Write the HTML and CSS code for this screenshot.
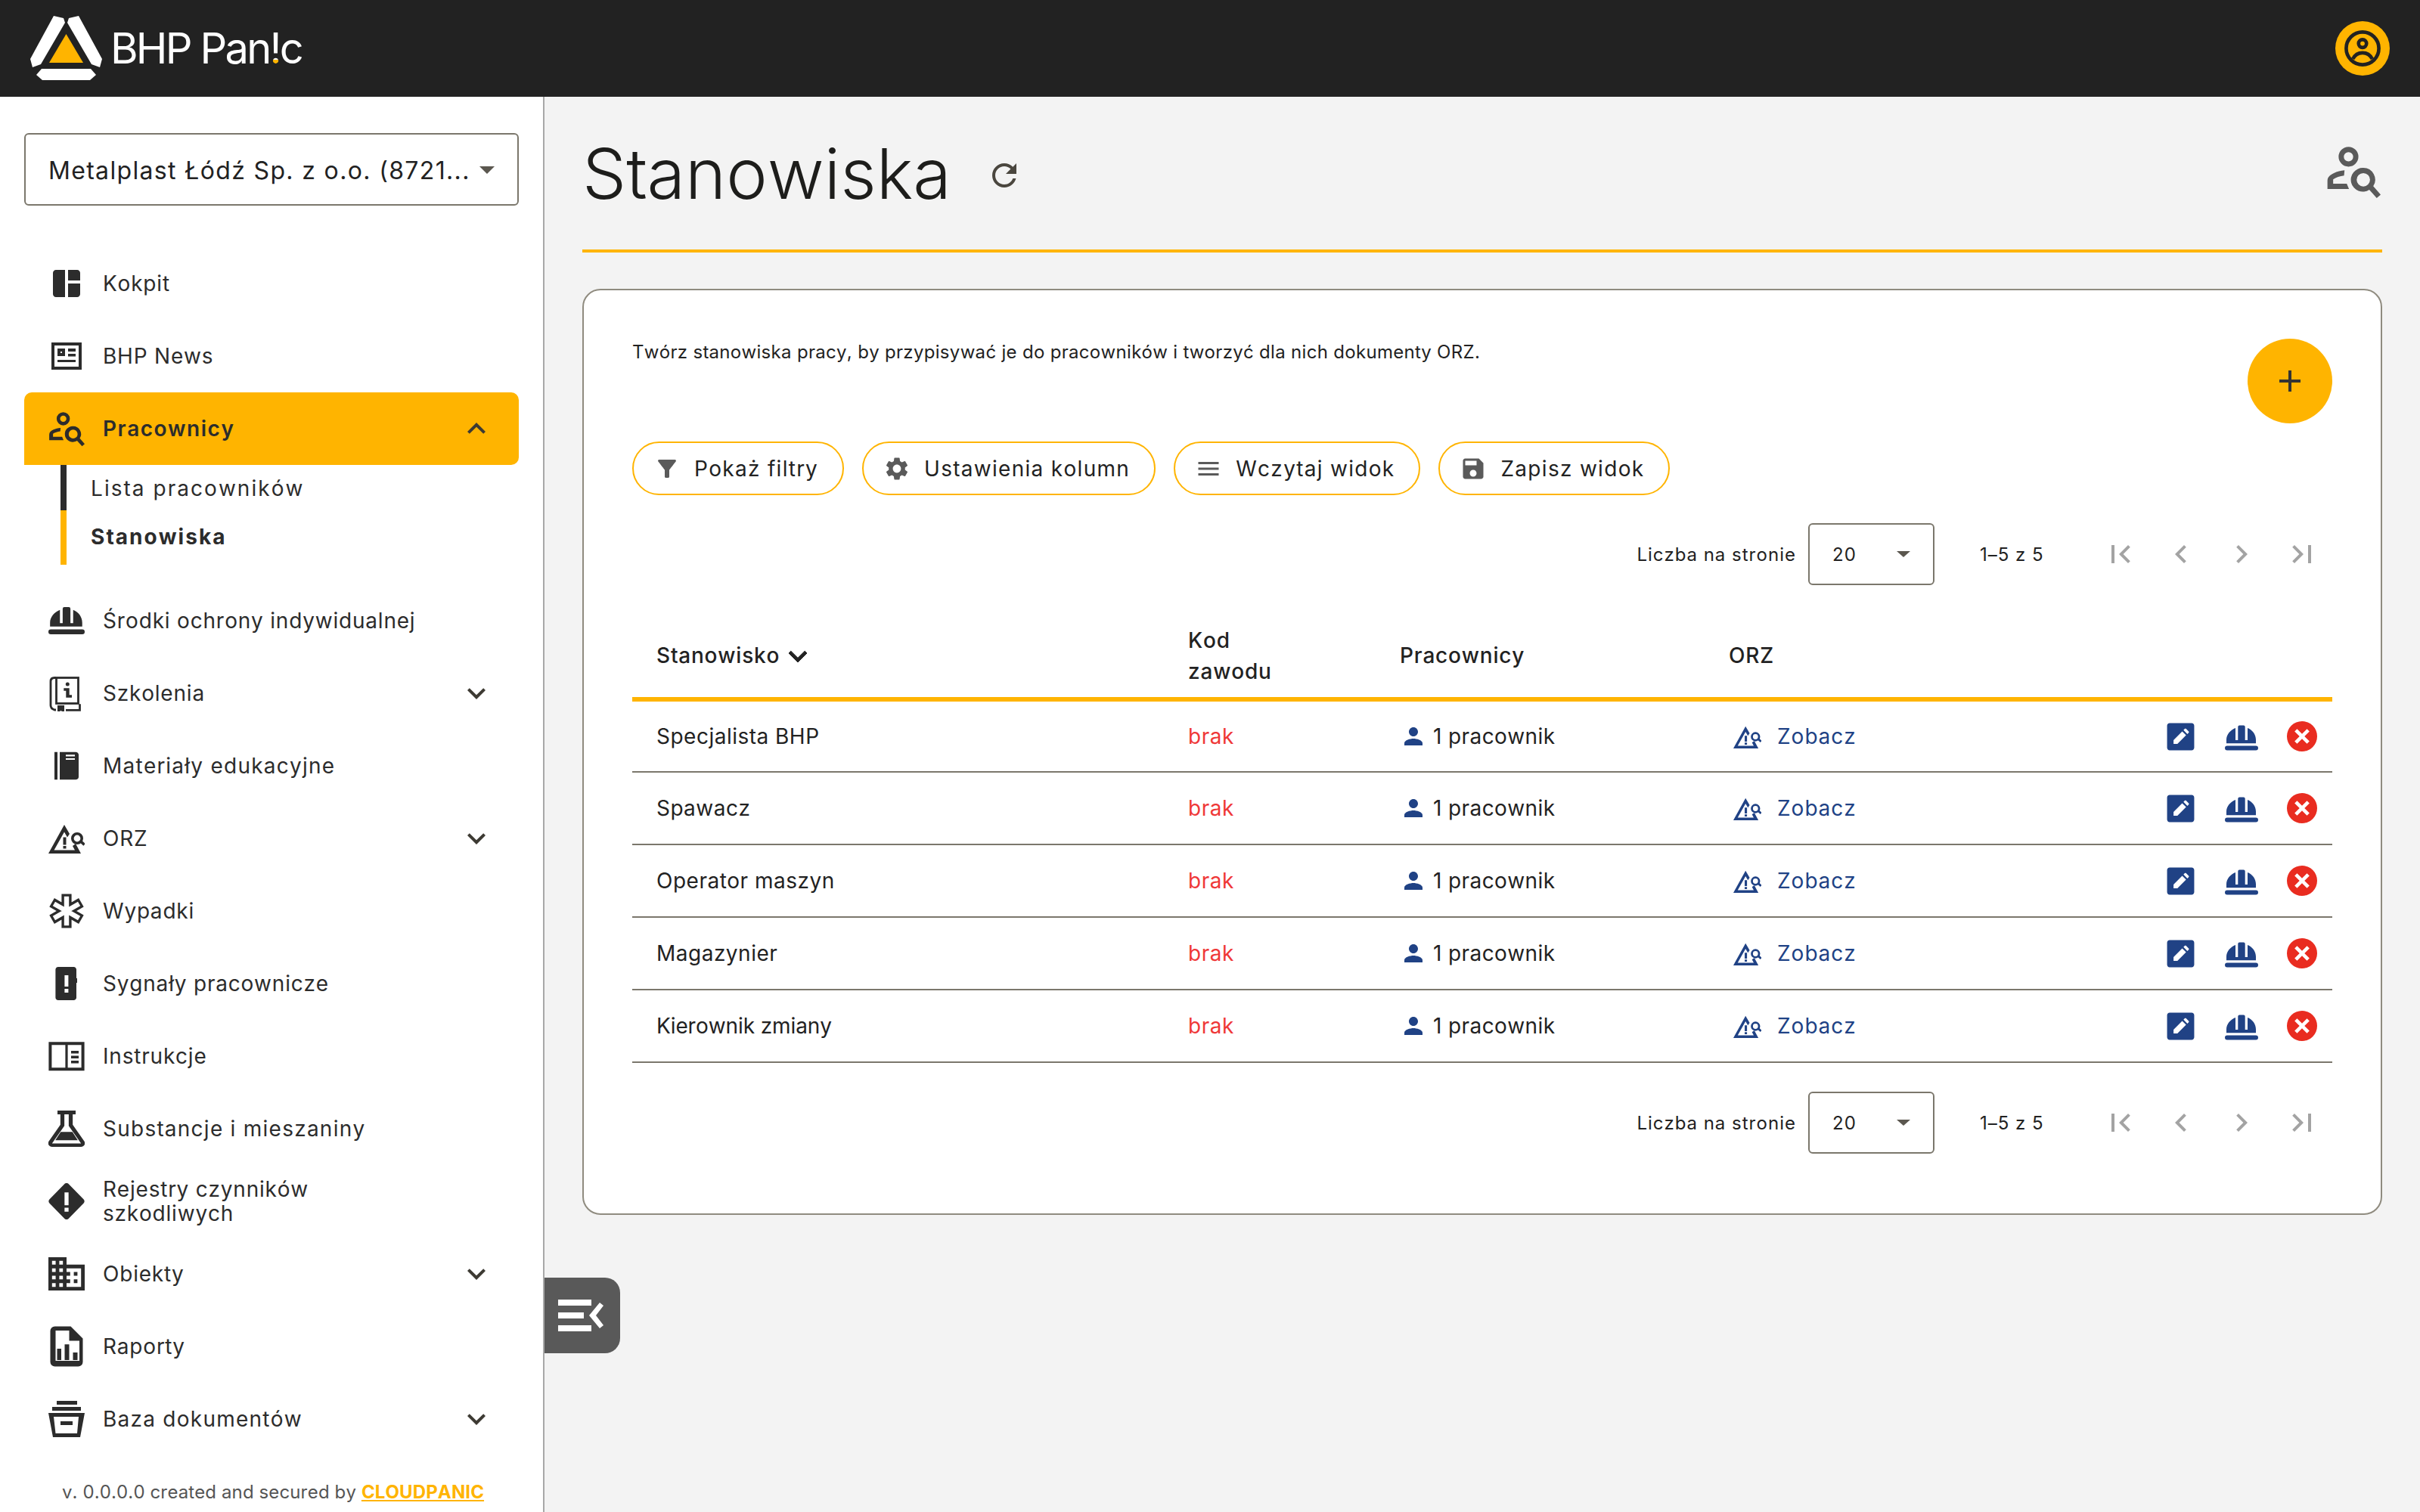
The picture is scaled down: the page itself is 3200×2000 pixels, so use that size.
FILE: index.html
```html
<!DOCTYPE html>
<html lang="pl">

<head>
    <meta charset="UTF-8">
    <title>BHP Panic - Stanowiska</title>
    <link rel="stylesheet" href="styles.css">
</head>

<body>
  <svg class="sprite" xmlns="http://www.w3.org/2000/svg">
    <symbol id="i-dash" viewBox="0 0 24 24"><path d="M11 21H5c-1.1 0-2-.9-2-2V5c0-1.1.9-2 2-2h6v18zm2 0h6c1.100 0 2-.9 2-2v-7h-8v9zm8-11V5c0-1.100-.9-2-2-2h-6v7h8z"/></symbol>
    <symbol id="i-news" viewBox="0 0 24 24"><path fill-rule="evenodd" d="M2 3h20v18H2zM4 5v14h16V5zM6 7h5v5H6zM8 9v1h1V9zM13 7h5v2h-5zM13 10.500h5v1.800h-5zM6 14.500h12v1.500H6z"/></symbol>
    <symbol id="i-person-search" viewBox="1 1.5 22 22"><path fill-rule="evenodd" d="M10 2.500a4 4 0 1 1 0 8 4 4 0 0 1 0-8zm0 2.100a1.900 1.900 0 1 0 0 3.800 1.900 1.900 0 0 0 0-3.800zM1.500 19.500v-3.300c0-1.500 1-2.300 2.600-3.100 1.300-.6 2.700-1 4.300-1.100l-.2 2.100c-1.700.2-3.300.7-4.400 1.500v1.800h5.500l.9 2.100zM16 11a4.800 4.800 0 0 1 4 7.400l3 3.400-1.600 1.400-3-3.400A4.800 4.800 0 1 1 16 11zm0 2.100a2.700 2.700 0 1 0 0 5.400 2.700 2.700 0 0 0 0-5.400z"/></symbol>
    <symbol id="i-helmet" viewBox="0 -5.500 44 44"><path d="M17.300 2a2 2 0 0 1 2-2h5.400a2 2 0 0 1 2 2V19.400H30V3.500C36.500 6 41 12 41 19V23.700H2V19C2 12 7.500 6 14 3.500V19.400H17.300zM3 27h38a3 3 0 0 1 0 6H3a3 3 0 0 1 0-6z"/></symbol>
    <symbol id="i-book-info" viewBox="14 12 48 48">
      <g fill="none" stroke="currentColor" stroke-width="2.800">
        <rect x="24.500" y="15.500" width="29" height="34"/>
        <path d="M24 15.500h-2c-3.500 0-5 2-5 5V52c0 3 2 5 5 6h2M37 58.300h18.500v-8"/>
      </g>
      <path d="M26 52h9v10l-4.500-3-4.500 3zM34.300 29.300h7.400v9h3.300v3.400h-7.700v-9h-3zM39.300 21.500a2.500 2.500 0 1 1 0 5 2.500 2.500 0 0 1 0-5z"/>
    </symbol>
    <symbol id="i-book" viewBox="0.5 -1.100 24 26.200" preserveAspectRatio="none"><path fill-rule="evenodd" d="M4.500 2H6.500V22H4.500zM8 2h10.500c1.100 0 2 .9 2 2v16c0 1.100-.9 2-2 2H8zM12 4v1.200h6V4zM12 6.500v1.200h6V6.500z"/></symbol>
    <symbol id="i-orz" viewBox="14 4 48 48">
      <path d="M35 10L42 22 39 26.500 35 19.500 21.500 43.500H49L46 38 50 35 57 48H14zM33.500 26.500h4v10h-4zM33.500 38h4v3.500h-4z"/>
      <circle cx="52" cy="28" r="6.200" fill="none" stroke="currentColor" stroke-width="3.600"/>
      <path d="M56 33.800L58.400 31 62.800 35 60.400 37.800z"/>
    </symbol>
    <symbol id="i-star" viewBox="0 0 24 24">
      <g fill="none" stroke="currentColor" stroke-width="6.600">
        <path d="M12 .8V23.200M2.300 6.400l19.400 11.200M2.300 17.600L21.700 6.400"/>
      </g>
      <g fill="none" stroke="#fff" stroke-width="3.200">
        <path d="M12 2.400V21.600M3.700 7.200l16.600 9.600M3.700 16.800L20.300 7.200"/>
      </g>
    </symbol>
    <symbol id="i-signal" viewBox="0 0 24 24"><path fill-rule="evenodd" d="M6.500 1h10.200c1 0 1.800.8 1.800 1.800v5.700h.5v3h-.5v9.700c0 1-.8 1.800-1.800 1.800H6.500c-1 0-1.800-.8-1.800-1.800V2.800c0-1 .8-1.800 1.800-1.800zM10.700 6.500v7.500h2.500V6.500zM10.700 15.500V18h2.500v-2.500z"/></symbol>
    <symbol id="i-reader" viewBox="0 0 24 24"><path fill-rule="evenodd" d="M.2 2.600h23.600v19H.2zM2.200 4.600v15h9v-15zM12.800 4.600v15h9v-15zM15 8.500h5v1.800h-5zM15 11.800h5v1.700h-5zM15 15h5v1.700h-5z"/></symbol>
    <symbol id="i-flask" viewBox="2 1 20 22" preserveAspectRatio="none"><path fill-rule="evenodd" d="M7 1h10v2.300h-1.600v6.300l6.400 10.100c.9 1.500-.2 3.300-1.900 3.300H4.100c-1.700 0-2.800-1.800-1.900-3.300L8.600 9.600V3.300H7zM10.800 3.300v7L4 20.900h16l-6.800-10.600v-7zM8.800 14h6.400l3 5H5.800z"/></symbol>
    <symbol id="i-diamond" viewBox="1.200 .8 21.600 22.400" preserveAspectRatio="none"><path fill-rule="evenodd" d="M10.600 1.500c.7-1 2.100-1 2.800 0l8.800 9.300c.6.700.6 1.700 0 2.400l-8.800 9.300c-.7 1-2.100 1-2.800 0l-8.800-9.300c-.6-.7-.6-1.700 0-2.400zM10.800 6.500v8h2.400v-8zM10.800 16v2.400h2.400V16z"/></symbol>
    <symbol id="i-domain" viewBox="2 2.200 20 19.600" preserveAspectRatio="none"><path d="M12 7V3H2v18h20V7H12zM6 19H4v-2h2v2zm0-4H4v-2h2v2zm0-4H4V9h2v2zm0-4H4V5h2v2zm4 12H8v-2h2v2zm0-4H8v-2h2v2zm0-4H8V9h2v2zm0-4H8V5h2v2zm10 12h-8v-2h2v-2h-2v-2h2v-2h-2V9h8v10zm-2-8h-2v2h2v-2zm0 4h-2v2h2v-2z"/></symbol>
    <symbol id="i-report" viewBox="-2.500 0 48 54"><path fill-rule="evenodd" d="M6 .5H27L43 16.500V47.500a6 6 0 0 1-6 6H6a6 6 0 0 1-6-6V6.500a6 6 0 0 1 6-6zM7 6V46H38.500V19.500H25V6zM9 30h5.500V45H9zM19 24.300h6V45H19zM30 35h6V45H30z"/></symbol>
    <symbol id="i-archive" viewBox="14 14 48 48"><path fill-rule="evenodd" d="M25 14h27v5H25zM19 22h38v5H19zM14 30h48l-6 32H20zM21 35l2.500 22h28.500L54 35zM30 41h16v5H30z"/></symbol>
    <symbol id="i-down" viewBox="0 0 24 24"><path d="M16.590 8.590L12 13.170 7.410 8.590 6 10l6 6 6-6z"/></symbol>
    <symbol id="i-up" viewBox="0 0 24 24"><path d="M12 8l-6 6 1.410 1.410L12 10.830l4.590 4.580L18 14z"/></symbol>
    <symbol id="i-filter" viewBox="0 0 24 24"><path d="M4.250 5.610C6.270 8.200 10 13 10 13v6c0 .55.45 1 1 1h2c.55 0 1-.45 1-1v-6s3.720-4.800 5.740-7.390C20.250 4.950 19.780 4 18.950 4H5.040c-.83 0-1.300.95-.79 1.610z"/></symbol>
    <symbol id="i-gear" viewBox="0 0 24 24"><path d="M19.140 12.940c.04-.3.06-.61.06-.94 0-.32-.02-.64-.07-.94l2.030-1.580c.18-.14.23-.41.12-.61l-1.920-3.320c-.12-.22-.37-.29-.59-.22l-2.390.96c-.5-.38-1.030-.7-1.620-.94l-.36-2.540c-.04-.24-.24-.41-.48-.41h-3.840c-.24 0-.43.17-.47.41l-.36 2.540c-.59.24-1.130.57-1.620.94l-2.390-.96c-.22-.08-.47 0-.59.22L2.740 8.870c-.12.21-.08.47.12.61l2.030 1.580c-.05.3-.09.63-.09.94s.02.64.07.94l-2.030 1.580c-.18.14-.23.41-.12.61l1.920 3.320c.12.22.37.29.59.22l2.390-.96c.5.38 1.030.7 1.620.94l.36 2.540c.05.24.24.41.48.41h3.840c.24 0 .44-.17.47-.41l.36-2.540c.59-.24 1.130-.56 1.620-.94l2.390.96c.22.08.47 0 .59-.22l1.920-3.320c.12-.22.07-.47-.12-.61l-2.010-1.580zM12 15.600c-1.980 0-3.600-1.620-3.600-3.600s1.620-3.600 3.600-3.600 3.600 1.620 3.600 3.600-1.620 3.600-3.600 3.600z"/></symbol>
    <symbol id="i-menu" viewBox="0 0 24 24"><path d="M3 18h18v-2H3v2zm0-5h18v-2H3v2zm0-7v2h18V6H3z"/></symbol>
    <symbol id="i-save" viewBox="0 0 24 24"><path d="M17 3H5c-1.110 0-2 .9-2 2v14c0 1.100.89 2 2 2h14c1.100 0 2-.9 2-2V7l-4-4zm-5 16c-1.660 0-3-1.340-3-3s1.340-3 3-3 3 1.340 3 3-1.340 3-3 3zm3-10H5V5h10v4z"/></symbol>
    <symbol id="i-refresh" viewBox="0 0 24 24"><path d="M17.650 6.350C16.200 4.900 14.210 4 12 4c-4.420 0-7.990 3.580-7.990 8s3.570 8 7.990 8c3.730 0 6.840-2.550 7.730-6h-2.080c-.82 2.330-3.040 4-5.650 4-3.310 0-6-2.690-6-6s2.690-6 6-6c1.660 0 3.140.69 4.220 1.780L13 11h7V4l-2.350 2.350z"/></symbol>
    <symbol id="i-person" viewBox="0 0 24 24"><path d="M12 12c2.210 0 4-1.790 4-4s-1.790-4-4-4-4 1.790-4 4 1.790 4 4 4zm0 2c-2.670 0-8 1.340-8 4v2h16v-2c0-2.660-5.330-4-8-4z"/></symbol>
    <symbol id="i-edit" viewBox="0 0 24 24"><path fill-rule="evenodd" d="M3.500 1.500h17c1.100 0 2 .9 2 2v17c0 1.100-.9 2-2 2h-17c-1.100 0-2-.9-2-2v-17c0-1.100.9-2 2-2zM6.500 14.600v3h3l6.700-6.700-3-3zM14.200 6.900l3 3 1-1c.3-.3.3-.7 0-1l-2-2c-.3-.3-.7-.3-1 0z"/></symbol>
    <symbol id="i-close" viewBox="1 1 22 22"><path fill-rule="evenodd" d="M12 1a11 11 0 1 1 0 22 11 11 0 0 1 0-22zM8.400 6.600L6.600 8.400 10.200 12l-3.600 3.600 1.800 1.800 3.600-3.600 3.600 3.600 1.800-1.800-3.600-3.600 3.600-3.600-1.800-1.800-3.600 3.600z"/></symbol>
    <symbol id="i-first" viewBox="0 0 24 24"><path d="M18.410 16.590L13.820 12l4.590-4.590L17 6l-6 6 6 6zM6 6h2v12H6z"/></symbol>
    <symbol id="i-prev" viewBox="0 0 24 24"><path d="M15.410 7.410L14 6l-6 6 6 6 1.410-1.410L10.830 12z"/></symbol>
    <symbol id="i-next" viewBox="0 0 24 24"><path d="M10 6L8.590 7.410 13.170 12l-4.580 4.590L10 18l6-6z"/></symbol>
    <symbol id="i-last" viewBox="0 0 24 24"><path d="M5.590 7.410L10.180 12l-4.590 4.590L7 18l6-6-6-6zM16 6h2v12h-2z"/></symbol>
  </svg>

  <header class="topbar">
    <div class="logo">
      <svg class="logo-mark" viewBox="0 0 95 85">
        <path fill="#fff" d="M31 0L44 3 46 9 14 64 3 68 0 57zM64 0L51 3 49 9 81 64 92 68 95 57z"/>
        <path fill="#ffb400" d="M47.500 24L70 62H25z"/>
        <path fill="#fff" d="M15 70H80L87 78 79 85H16L8 78z"/>
      </svg>
      <span class="logo-text">BHP Pan<span class="logo-bang">!</span>c</span>
    </div>
    <div class="avatar">
      <svg viewBox="0 0 48 48" fill="none" stroke="#222" stroke-width="4">
        <circle cx="24" cy="24" r="18.500"/>
        <circle cx="24" cy="18.500" r="4.500"/>
        <path d="M13 36c2.500-5 6-7 11-7s8.500 2 11 7"/>
      </svg>
    </div>
  </header>

  <div class="layout">
    <aside class="sidebar">
      <div class="company-select">
        <span class="company-name">Metalplast Łódź Sp. z o.o. (8721...</span>
        <span class="select-arrow"></span>
      </div>

      <nav class="nav">
        <a class="nav-item"><svg class="nav-icon"><use href="#i-dash"/></svg><span>Kokpit</span></a>
        <a class="nav-item"><svg class="nav-icon"><use href="#i-news"/></svg><span>BHP News</span></a>
        <a class="nav-item active"><svg class="nav-icon"><use href="#i-person-search"/></svg><span>Pracownicy</span><svg class="nav-chevron"><use href="#i-up"/></svg></a>
        <div class="subnav">
          <a class="sub-item">Lista pracowników</a>
          <a class="sub-item current">Stanowiska</a>
        </div>
        <a class="nav-item"><svg class="nav-icon"><use href="#i-helmet"/></svg><span>Środki ochrony indywidualnej</span></a>
        <a class="nav-item"><svg class="nav-icon"><use href="#i-book-info"/></svg><span>Szkolenia</span><svg class="nav-chevron"><use href="#i-down"/></svg></a>
        <a class="nav-item"><svg class="nav-icon"><use href="#i-book"/></svg><span class="wide">Materiały edukacyjne</span></a>
        <a class="nav-item"><svg class="nav-icon"><use href="#i-orz"/></svg><span>ORZ</span><svg class="nav-chevron"><use href="#i-down"/></svg></a>
        <a class="nav-item"><svg class="nav-icon"><use href="#i-star"/></svg><span>Wypadki</span></a>
        <a class="nav-item"><svg class="nav-icon"><use href="#i-signal"/></svg><span>Sygnały pracownicze</span></a>
        <a class="nav-item"><svg class="nav-icon"><use href="#i-reader"/></svg><span>Instrukcje</span></a>
        <a class="nav-item"><svg class="nav-icon"><use href="#i-flask"/></svg><span class="wide">Substancje i mieszaniny</span></a>
        <a class="nav-item"><svg class="nav-icon"><use href="#i-diamond"/></svg><span class="two-line">Rejestry czynników szkodliwych</span></a>
        <a class="nav-item"><svg class="nav-icon"><use href="#i-domain"/></svg><span>Obiekty</span><svg class="nav-chevron"><use href="#i-down"/></svg></a>
        <a class="nav-item"><svg class="nav-icon tall"><use href="#i-report"/></svg><span>Raporty</span></a>
        <a class="nav-item"><svg class="nav-icon"><use href="#i-archive"/></svg><span class="wide">Baza dokumentów</span><svg class="nav-chevron"><use href="#i-down"/></svg></a>
      </nav>

      <p class="version">v. 0.0.0.0 created and secured by <a class="version-link">CLOUDPANIC</a></p>
    </aside>

    <button class="collapse-btn">
      <svg viewBox="0 0 60 60" fill="#fff"><path d="M0 9h44v8H0zM0 26h34v8H0zM0 43h44v8H0zM60 17L50 30 60 43 55 47 41 30 55 13z"/></svg>
    </button>

    <main class="content">
      <div class="page-head">
        <h1>Stanowiska</h1>
        <svg class="refresh"><use href="#i-refresh"/></svg>
        <svg class="head-icon"><use href="#i-person-search"/></svg>
      </div>

      <section class="card">
        <div class="card-top">
          <p class="intro">Twórz stanowiska pracy, by przypisywać je do pracowników i tworzyć dla nich dokumenty ORZ.</p>
          <button class="fab">
            <svg viewBox="0 0 24 24" fill="#333"><path d="M19 13h-6v6h-2v-6H5v-2h6V5h2v6h6v2z"/></svg>
          </button>
        </div>

        <div class="chips">
          <button class="chip"><svg><use href="#i-filter"/></svg>Pokaż filtry</button>
          <button class="chip"><svg><use href="#i-gear"/></svg>Ustawienia kolumn</button>
          <button class="chip"><svg><use href="#i-menu"/></svg>Wczytaj widok</button>
          <button class="chip"><svg><use href="#i-save"/></svg>Zapisz widok</button>
        </div>

        <div class="pager">
          <span class="pager-label">Liczba na stronie</span>
          <div class="pager-select"><span>20</span><span class="select-arrow small"></span></div>
          <span class="pager-range">1–5 z 5</span>
          <div class="pager-btns">
            <svg><use href="#i-first"/></svg>
            <svg><use href="#i-prev"/></svg>
            <svg><use href="#i-next"/></svg>
            <svg><use href="#i-last"/></svg>
          </div>
        </div>

        <table class="positions">
          <thead>
            <tr>
              <th class="col-name"><span class="sort">Stanowisko<svg><use href="#i-down"/></svg></span></th>
              <th class="col-code">Kod<br>zawodu</th>
              <th class="col-people">Pracownicy</th>
              <th class="col-orz">ORZ</th>
              <th></th>
            </tr>
          </thead>
          <tbody>
            <tr>
              <td>Specjalista BHP</td>
              <td class="missing">brak</td>
              <td><span class="people"><svg><use href="#i-person"/></svg>1 pracownik</span></td>
              <td><a class="orz-link"><svg><use href="#i-orz"/></svg>Zobacz</a></td>
              <td><div class="actions"><svg class="act-edit"><use href="#i-edit"/></svg><svg class="act-helmet"><use href="#i-helmet"/></svg><svg class="act-del"><use href="#i-close"/></svg></div></td>
            </tr>
            <tr>
              <td>Spawacz</td>
              <td class="missing">brak</td>
              <td><span class="people"><svg><use href="#i-person"/></svg>1 pracownik</span></td>
              <td><a class="orz-link"><svg><use href="#i-orz"/></svg>Zobacz</a></td>
              <td><div class="actions"><svg class="act-edit"><use href="#i-edit"/></svg><svg class="act-helmet"><use href="#i-helmet"/></svg><svg class="act-del"><use href="#i-close"/></svg></div></td>
            </tr>
            <tr>
              <td>Operator maszyn</td>
              <td class="missing">brak</td>
              <td><span class="people"><svg><use href="#i-person"/></svg>1 pracownik</span></td>
              <td><a class="orz-link"><svg><use href="#i-orz"/></svg>Zobacz</a></td>
              <td><div class="actions"><svg class="act-edit"><use href="#i-edit"/></svg><svg class="act-helmet"><use href="#i-helmet"/></svg><svg class="act-del"><use href="#i-close"/></svg></div></td>
            </tr>
            <tr>
              <td>Magazynier</td>
              <td class="missing">brak</td>
              <td><span class="people"><svg><use href="#i-person"/></svg>1 pracownik</span></td>
              <td><a class="orz-link"><svg><use href="#i-orz"/></svg>Zobacz</a></td>
              <td><div class="actions"><svg class="act-edit"><use href="#i-edit"/></svg><svg class="act-helmet"><use href="#i-helmet"/></svg><svg class="act-del"><use href="#i-close"/></svg></div></td>
            </tr>
            <tr>
              <td class="tight">Kierownik zmiany</td>
              <td class="missing">brak</td>
              <td><span class="people"><svg><use href="#i-person"/></svg>1 pracownik</span></td>
              <td><a class="orz-link"><svg><use href="#i-orz"/></svg>Zobacz</a></td>
              <td><div class="actions"><svg class="act-edit"><use href="#i-edit"/></svg><svg class="act-helmet"><use href="#i-helmet"/></svg><svg class="act-del"><use href="#i-close"/></svg></div></td>
            </tr>
          </tbody>
        </table>

        <div class="pager pager-bottom">
          <span class="pager-label">Liczba na stronie</span>
          <div class="pager-select"><span>20</span><span class="select-arrow small"></span></div>
          <span class="pager-range">1–5 z 5</span>
          <div class="pager-btns">
            <svg><use href="#i-first"/></svg>
            <svg><use href="#i-prev"/></svg>
            <svg><use href="#i-next"/></svg>
            <svg><use href="#i-last"/></svg>
          </div>
        </div>
      </section>
    </main>
  </div>
</body>

</html>
```

FILE: styles.css
```css
* {
    margin: 0;
    padding: 0;
    box-sizing: border-box;
}

body {
    font-family: 'Inter', 'Liberation Sans', sans-serif;
    font-kerning: none;
    background: #f3f3f3;
    color: #222;
    width: 3200px;
    height: 2000px;
    overflow: hidden;
}

svg:not([fill]) {
    fill: currentColor;
}

.sprite {
    display: none;
}

/* Top bar */
.topbar {
    height: 128px;
    background: #222;
    display: flex;
    align-items: center;
    justify-content: space-between;
    padding: 0 40px;
}

.logo {
    display: flex;
    align-items: center;
    gap: 11px;
}

.logo-mark {
    width: 95px;
    height: 85px;
    margin-top: -1px;
}

.logo-text {
    color: #fff;
    font-size: 56px;
    font-weight: 400;
    letter-spacing: -2.800px;
}

.logo-bang {
    background: linear-gradient(#fff 72%, #ffb400 72%);
    -webkit-background-clip: text;
    background-clip: text;
    color: transparent;
}

.avatar {
    width: 72px;
    height: 72px;
    border-radius: 50%;
    background: #ffb400;
    display: flex;
    align-items: center;
    justify-content: center;
}

.avatar svg {
    width: 56px;
    height: 56px;
}

/* Sidebar */
.layout {
    display: flex;
    height: 1872px;
    position: relative;
}

.sidebar {
    width: 720px;
    flex-shrink: 0;
    background: #fff;
    border-right: 2px solid #a8a8a8;
    padding: 48px 32px 0;
}

.company-select {
    width: 654px;
    height: 96px;
    border: 2px solid #7b776c;
    border-radius: 6px;
    display: flex;
    align-items: center;
    justify-content: space-between;
    padding: 2px 30px 0;
}

.company-name {
    font-size: 32px;
    letter-spacing: 1.350px;
    white-space: nowrap;
}

.select-arrow {
    width: 0;
    height: 0;
    border-left: 10px solid transparent;
    border-right: 10px solid transparent;
    border-top: 10px solid #5b574f;
}

.select-arrow.small {
    border-left-width: 9px;
    border-right-width: 9px;
    border-top-width: 8px;
}

.nav {
    margin-top: 55px;
    font-size: 28px;
    letter-spacing: 0.8px;
}

.nav-item {
    height: 96px;
    display: flex;
    align-items: center;
    padding-left: 32px;
    padding-right: 32px;
    color: #2c2c2c;
    line-height: 32px;
}

.nav-item.active {
    background: #ffb400;
    border-radius: 10px 10px 10px 0;
    font-weight: 600;
    letter-spacing: 1.500px;
}

.nav-icon {
    width: 48px;
    height: 48px;
    margin-right: 24px;
    flex-shrink: 0;
}

.nav-icon.tall {
    height: 54px;
}

.wide {
    letter-spacing: 1.250px;
}

.two-line {
    width: 340px;
}

.nav-chevron {
    width: 48px;
    height: 48px;
    margin-left: auto;
    color: #3d3a33;
}

.subnav {
    margin-left: 48px;
    margin-bottom: 26px;
    letter-spacing: 2.050px;
}

.sub-item {
    display: flex;
    align-items: center;
    height: 60px;
    padding-left: 32px;
    padding-top: 2px;
    border-left: 8px solid #2c2c2c;
    color: #2c2c2c;
}

.sub-item.current {
    height: 72px;
    border-left-color: #ffb400;
    font-weight: 700;
    padding-top: 0;
    padding-bottom: 2px;
}

.version {
    margin-top: 34px;
    padding-left: 50px;
    font-size: 24px;
    letter-spacing: 0.120px;
    color: #555;
    white-space: nowrap;
}

.version-link {
    color: #ffb400;
    font-weight: 700;
    text-decoration: underline;
}

.collapse-btn {
    position: absolute;
    left: 720px;
    top: 1562px;
    width: 100px;
    height: 100px;
    background: #595959;
    border: none;
    border-radius: 0 20px 20px 0;
    padding-right: 4px;
    display: flex;
    align-items: center;
    justify-content: center;
}

.collapse-btn svg {
    width: 60px;
    height: 60px;
}

/* Main content */
.content {
    flex: 1;
    padding: 0 50px;
    min-width: 0;
}

.page-head {
    height: 206px;
    border-bottom: 4px solid #ffb400;
    display: flex;
    align-items: center;
}

.page-head h1 {
    font-size: 92px;
    font-weight: 300;
    color: #1d1d1b;
}

.refresh {
    width: 48px;
    height: 48px;
    margin-left: 46px;
    margin-top: 6px;
    color: #4a463e;
}

.head-icon {
    width: 72px;
    height: 72px;
    margin-left: auto;
    margin-right: 2px;
    margin-top: -4px;
    color: #5a5a5a;
}

.card {
    margin-top: 48px;
    height: 1225px;
    background: #fff;
    border: 2px solid #8f8b7f;
    border-radius: 24px;
    padding: 64px;
}

.card-top {
    display: flex;
    justify-content: space-between;
    align-items: flex-start;
}

.intro {
    font-size: 24px;
    letter-spacing: 0.310px;
    margin-top: 2px;
    line-height: 32px;
}

.fab {
    width: 112px;
    height: 112px;
    border-radius: 50%;
    border: none;
    background: #ffb400;
    display: flex;
    align-items: center;
    justify-content: center;
}

.fab svg {
    width: 48px;
    height: 48px;
}

.chips {
    display: flex;
    gap: 24px;
    margin-top: 24px;
}

.chip {
    height: 71px;
    border: 2px solid #ffb400;
    border-radius: 36px;
    background: #fff;
    display: flex;
    align-items: center;
    gap: 18px;
    padding: 0 32px 0 26px;
    font-family: inherit;
    font-kerning: none;
    font-size: 28px;
    letter-spacing: 1.300px;
    color: #222;
}

.chip svg {
    width: 36px;
    height: 36px;
    color: #5a5a5a;
}

.pager {
    display: flex;
    align-items: center;
    justify-content: flex-end;
    margin-top: 37px;
    font-size: 24px;
    letter-spacing: 1px;
    padding-right: 16px;
}

.pager-bottom {
    margin-top: 38px;
}

.pager-select {
    width: 167px;
    height: 82px;
    margin-left: 16px;
    border: 2px solid #7b776c;
    border-radius: 6px;
    display: flex;
    align-items: center;
    justify-content: space-between;
    padding: 0 30px;
}

.pager-range {
    margin-left: 60px;
    width: 162px;
}

.pager-btns {
    display: flex;
    gap: 32px;
    color: #a3a3a3;
}

.pager-btns svg {
    width: 48px;
    height: 48px;
}

.positions {
    width: 100%;
    margin-top: 39px;
    border-collapse: collapse;
    table-layout: fixed;
    font-size: 28px;
    letter-spacing: 0.5px;
}

.positions th {
    height: 112px;
    border-bottom: 6px solid #ffb400;
    text-align: left;
    font-weight: 500;
    line-height: 41px;
    letter-spacing: 0.8px;
    color: #222;
}

.positions td {
    height: 96px;
    border-bottom: 2px solid #7b776c;
}

.positions th:first-child,
.positions td:first-child {
    padding-left: 32px;
}

.positions td.tight {
    letter-spacing: -0.100px;
}

.col-name {
    width: 735px;
}

.col-code {
    width: 280px;
}

.col-people {
    width: 435px;
}

.col-orz {
    width: 400px;
}

.sort {
    display: flex;
    align-items: center;
}

.sort svg {
    width: 48px;
    height: 48px;
    stroke: currentColor;
    stroke-width: 0.5px;
}

.missing {
    color: #ef3838;
}

.people {
    display: flex;
    align-items: center;
    gap: 8px;
    letter-spacing: 0.4px;
}

.people svg {
    width: 36px;
    height: 36px;
    color: #204285;
}

.orz-link {
    display: flex;
    align-items: center;
    gap: 21px;
    padding-left: 6px;
    color: #204285;
    letter-spacing: 1px;
}

.orz-link svg {
    width: 37px;
    height: 37px;
}

.actions {
    display: flex;
    justify-content: flex-end;
    align-items: center;
    padding-right: 20px;
}

.act-edit {
    width: 41px;
    height: 41px;
    margin-right: 38px;
    color: #204285;
}

.act-helmet {
    width: 44px;
    height: 44px;
    margin-right: 38px;
    margin-top: 3px;
    color: #204285;
}

.act-del {
    width: 40px;
    height: 40px;
    color: #e92c20;
}
```
